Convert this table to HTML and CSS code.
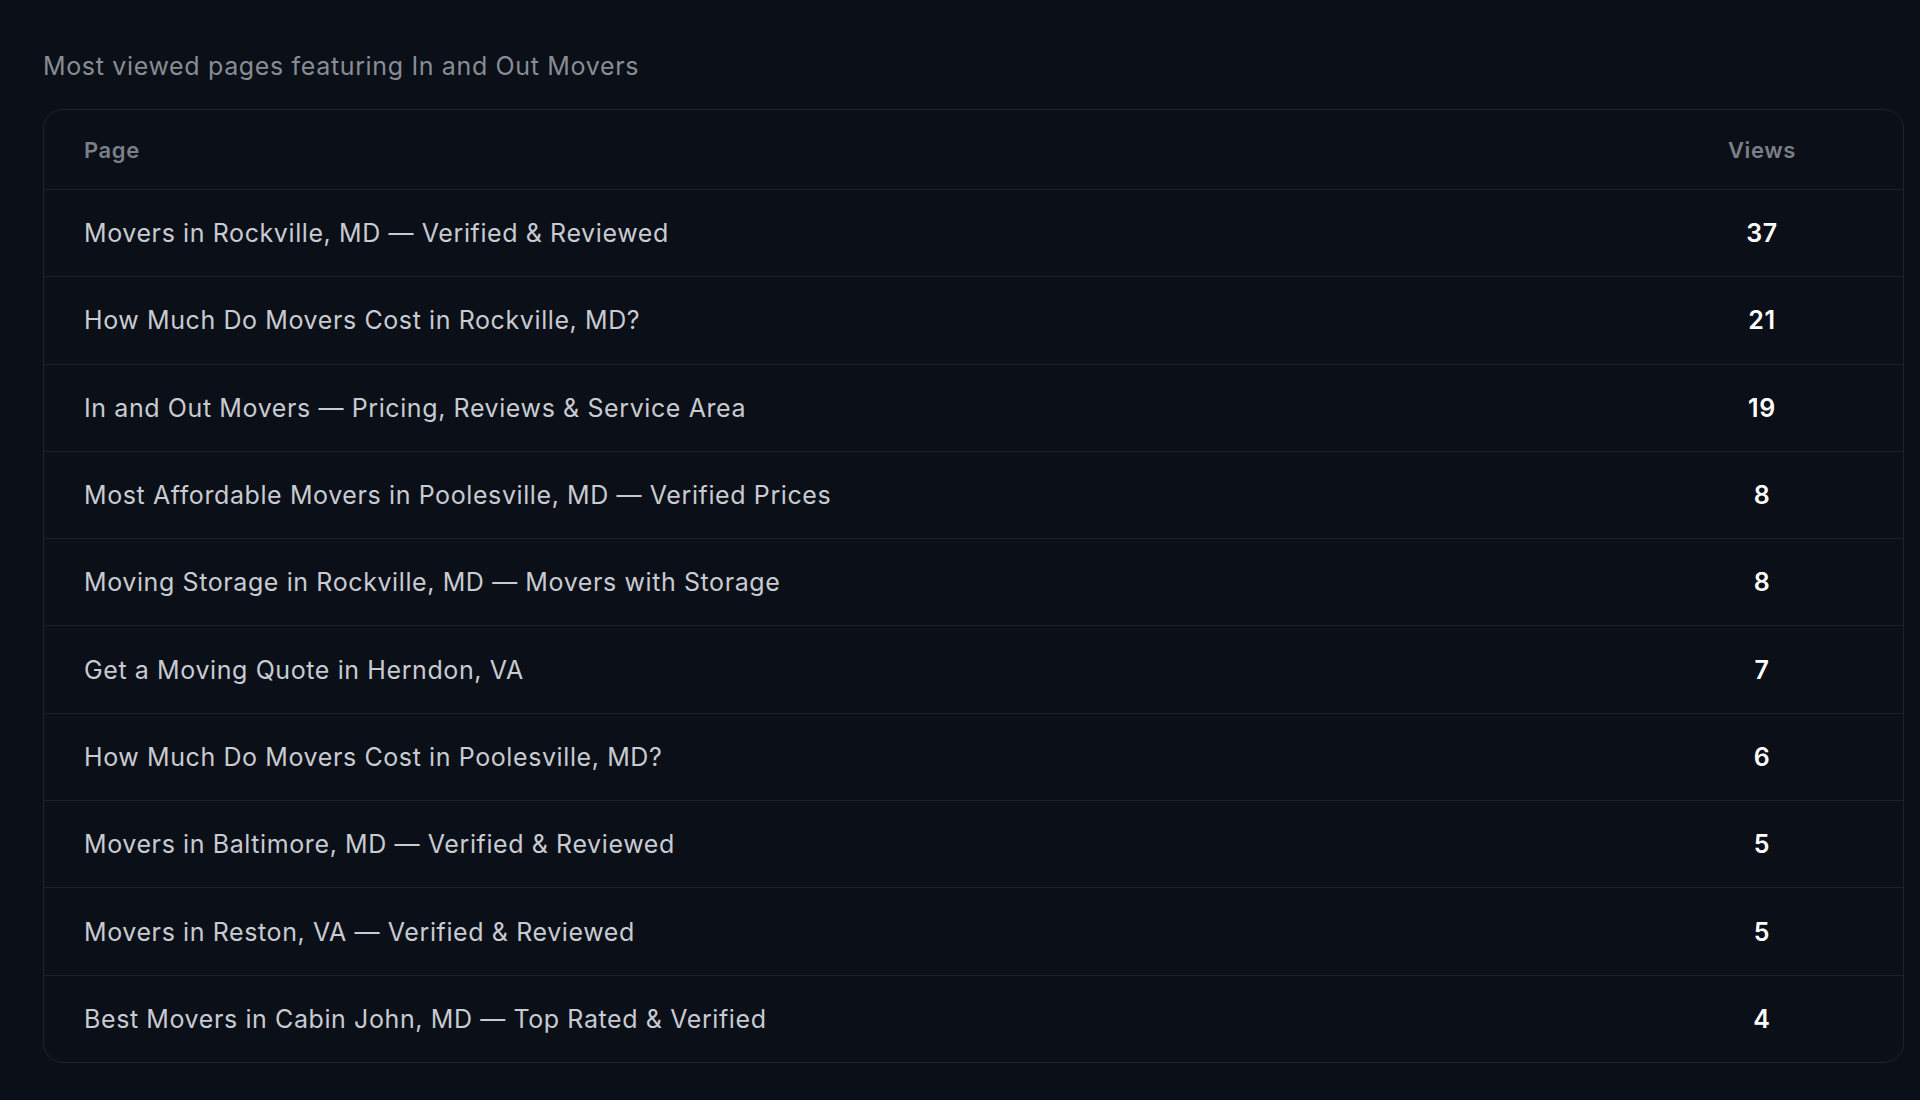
FILE: index.html
```html
<!DOCTYPE html>
<html>
<head>
<meta charset="utf-8">
<link rel="stylesheet" href="styles.css">
</head>
<body>
<div class="wrap">
  <div class="title">Most viewed pages featuring In and Out Movers</div>
  <div class="card">
    <div class="head">
      <div class="cell-page">Page</div>
      <div class="cell-views">Views</div>
    </div>
    <div class="row"><div class="cell-page">Movers in Rockville, MD — Verified &amp; Reviewed</div><div class="cell-views">37</div></div>
    <div class="row"><div class="cell-page">How Much Do Movers Cost in Rockville, MD?</div><div class="cell-views">21</div></div>
    <div class="row"><div class="cell-page">In and Out Movers — Pricing, Reviews &amp; Service Area</div><div class="cell-views">19</div></div>
    <div class="row"><div class="cell-page">Most Affordable Movers in Poolesville, MD — Verified Prices</div><div class="cell-views">8</div></div>
    <div class="row"><div class="cell-page">Moving Storage in Rockville, MD — Movers with Storage</div><div class="cell-views">8</div></div>
    <div class="row"><div class="cell-page">Get a Moving Quote in Herndon, VA</div><div class="cell-views">7</div></div>
    <div class="row"><div class="cell-page">How Much Do Movers Cost in Poolesville, MD?</div><div class="cell-views">6</div></div>
    <div class="row"><div class="cell-page">Movers in Baltimore, MD — Verified &amp; Reviewed</div><div class="cell-views">5</div></div>
    <div class="row"><div class="cell-page">Movers in Reston, VA — Verified &amp; Reviewed</div><div class="cell-views">5</div></div>
    <div class="row"><div class="cell-page">Best Movers in Cabin John, MD — Top Rated &amp; Verified</div><div class="cell-views">4</div></div>
  </div>
</div>
</body>
</html>
```

FILE: styles.css
```css
html, body {
  margin: 0;
  padding: 0;
  background: #0b0f17;
}
body {
  font-family: Inter, "Noto Sans", sans-serif;
}
.wrap {
  padding: 50px 16px 0 43px;
}
.title {
  font-size: 25px;
  letter-spacing: 0.65px;
  line-height: 32px;
  color: #878c95;
  margin-bottom: 27px;
}
.card {
  border: 1px solid #1f232c;
  border-radius: 20px;
  overflow: hidden;
}
.head, .row {
  display: grid;
  grid-template-columns: 1fr 282px;
  align-items: center;
  border-bottom: 1px solid #1c2029;
}
.head {
  height: 79px;
  font-size: 22px;
  letter-spacing: 0.6px;
  font-weight: 600;
  color: #7a7f88;
}
.row {
  height: 86.3px;
  font-size: 25px;
  letter-spacing: 0.6px;
  color: #c8cbd1;
}
.row:last-child {
  border-bottom: none;
}
.cell-page {
  padding-left: 40px;
}
.cell-views {
  text-align: center;
}
.row .cell-views {
  color: #ffffff;
  font-weight: 600;
}
```
